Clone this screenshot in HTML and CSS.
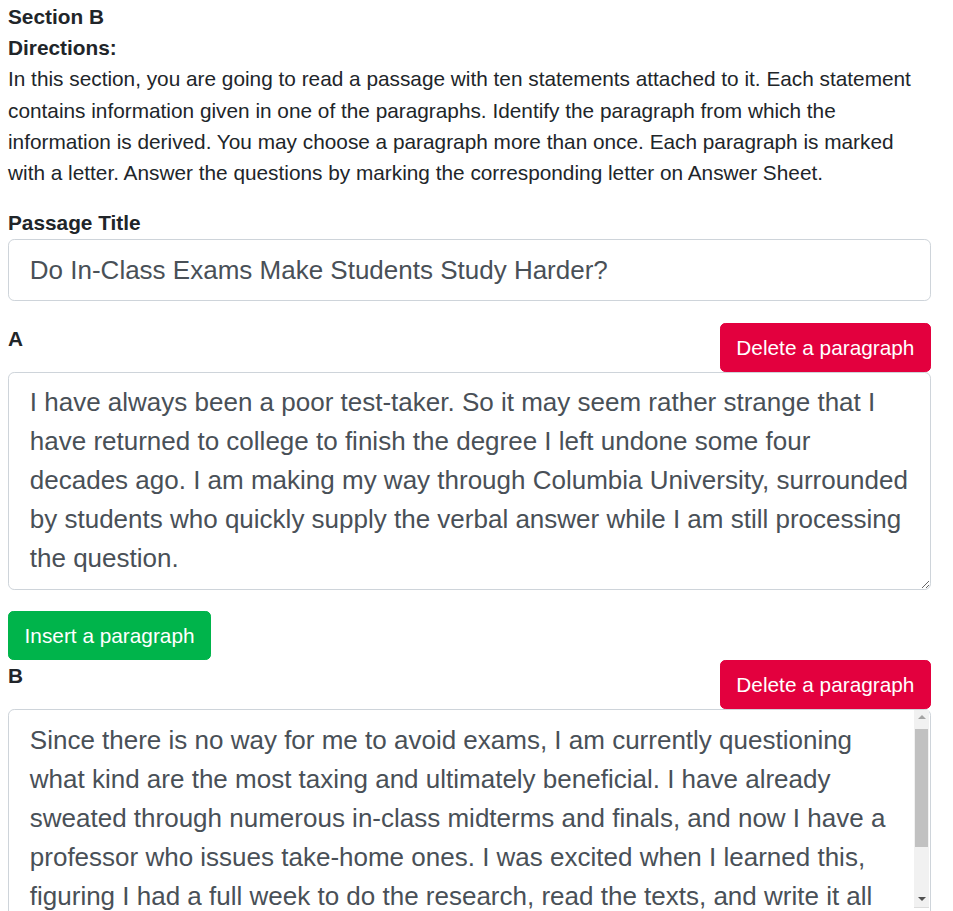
FILE: index.html
```html
<!DOCTYPE html>
<html lang="en">
<head>
<meta charset="utf-8">
<title>Section B</title>
<link rel="stylesheet" href="styles.css">
</head>
<body>
<div class="page">
  <div class="section-title">Section B</div>
  <div class="directions-title">Directions:</div>
  <p class="directions">In this section, you are going to read a passage with ten statements attached to it. Each statement contains information given in one of the paragraphs. Identify the paragraph from which the information is derived. You may choose a paragraph more than once. Each paragraph is marked with a letter. Answer the questions by marking the corresponding letter on Answer Sheet.</p>

  <div class="form-group">
    <label class="field-label" for="title">Passage Title</label>
    <input id="title" class="form-control" type="text" value="Do In-Class Exams Make Students Study Harder?">
  </div>

  <div class="para-block">
    <div class="para-head">
      <span class="para-letter">A</span>
      <button class="btn btn-delete" type="button">Delete a paragraph</button>
    </div>
    <textarea class="form-control para-text">I have always been a poor test-taker. So it may seem rather strange that I have returned to college to finish the degree I left undone some four decades ago. I am making my way through Columbia University, surrounded by students who quickly supply the verbal answer while I am still processing the question.</textarea>
  </div>

  <button class="btn btn-insert" type="button">Insert a paragraph</button>

  <div class="para-block">
    <div class="para-head">
      <span class="para-letter">B</span>
      <button class="btn btn-delete" type="button">Delete a paragraph</button>
    </div>
    <div class="scroll-wrap">
      <textarea class="form-control para-text para-scroll">Since there is no way for me to avoid exams, I am currently questioning what kind are the most taxing and ultimately beneficial. I have already sweated through numerous in-class midterms and finals, and now I have a professor who issues take-home ones. I was excited when I learned this, figuring I had a full week to do the research, read the texts, and write it all up. In fact, I was thinking take-homes were so easy that I wondered why all professors didn't give them.</textarea>
      <div class="vscroll" aria-hidden="true">
        <div class="vscroll-btn"><span class="tri tri-up"></span></div>
        <div class="vscroll-track"><div class="vscroll-thumb"></div></div>
        <div class="vscroll-btn"><span class="tri tri-down"></span></div>
      </div>
      <div class="vscroll-corner" aria-hidden="true"></div>
    </div>
  </div>
</div>
</body>
</html>
```
FILE: styles.css
```css
html {
  font-size: 20.8px;
  overflow: hidden;
}

body {
  margin: 0;
  font-family: "Liberation Sans", Arial, Helvetica, sans-serif;
  font-size: 1rem;
  line-height: 1.5;
  color: #212529;
  background: #fff;
}

.page {
  width: 923px;
  margin-left: 8px;
  padding-top: 1px;
}

.section-title,
.directions-title {
  font-weight: 700;
}

.directions {
  margin: 0 0 19px;
}

.form-group {
  margin-bottom: 22px;
}

.field-label {
  display: block;
  font-weight: 700;
  margin-bottom: 0.5px;
}

.form-control {
  display: block;
  box-sizing: border-box;
  width: 100%;
  margin: 0;
  padding: 0.5rem 1rem;
  font-family: inherit;
  font-size: 1.25rem;
  line-height: 39px;
  color: #495057;
  background: #fff;
  border: 1px solid #ced4da;
  border-radius: 0.3rem;
  outline: none;
}

input.form-control {
  height: 62.5px;
  padding-top: 11px;
}

.para-text {
  height: 218px;
  resize: vertical;
}

.para-scroll {
  padding-top: 11px;
  padding-right: 36px;
  overflow: hidden;
}

.para-block {
  margin-bottom: 21px;
}

.para-head {
  display: flex;
  justify-content: space-between;
  align-items: flex-start;
}

.para-letter {
  font-weight: 700;
}

.btn {
  display: inline-block;
  box-sizing: border-box;
  padding: 0.375rem 0.75rem;
  font-family: inherit;
  font-size: 1rem;
  line-height: 1.5;
  color: #fff;
  border: 1px solid transparent;
  border-radius: 0.25rem;
  cursor: pointer;
}

.btn-delete {
  background: #e3003e;
  border-color: #e3003e;
}

.btn-insert {
  background: #00b44b;
  border-color: #00b44b;
}

/* fake classic scrollbar drawn over textarea B */
.scroll-wrap {
  position: relative;
}

.vscroll {
  position: absolute;
  top: 1px;
  right: 2px;
  width: 15px;
  height: 197px;
  display: flex;
  flex-direction: column;
  background: #f1f1f1;
}

.vscroll-btn {
  height: 15px;
  flex: none;
  display: flex;
  align-items: center;
  justify-content: center;
}

.vscroll-track {
  flex: 1;
  padding: 4px 1px 0;
}

.vscroll-thumb {
  height: 118px;
  background: #c1c1c1;
}

.tri {
  width: 0;
  height: 0;
  border-left: 4px solid transparent;
  border-right: 4px solid transparent;
}

.tri-up {
  border-bottom: 4px solid #a3a3a3;
}

.tri-down {
  border-top: 4px solid #505050;
}

.vscroll-corner {
  position: absolute;
  top: 198px;
  right: 2px;
  width: 15px;
  height: 18px;
  background: #fff;
  border-top: 1px solid #dcdcdc;
}
```
